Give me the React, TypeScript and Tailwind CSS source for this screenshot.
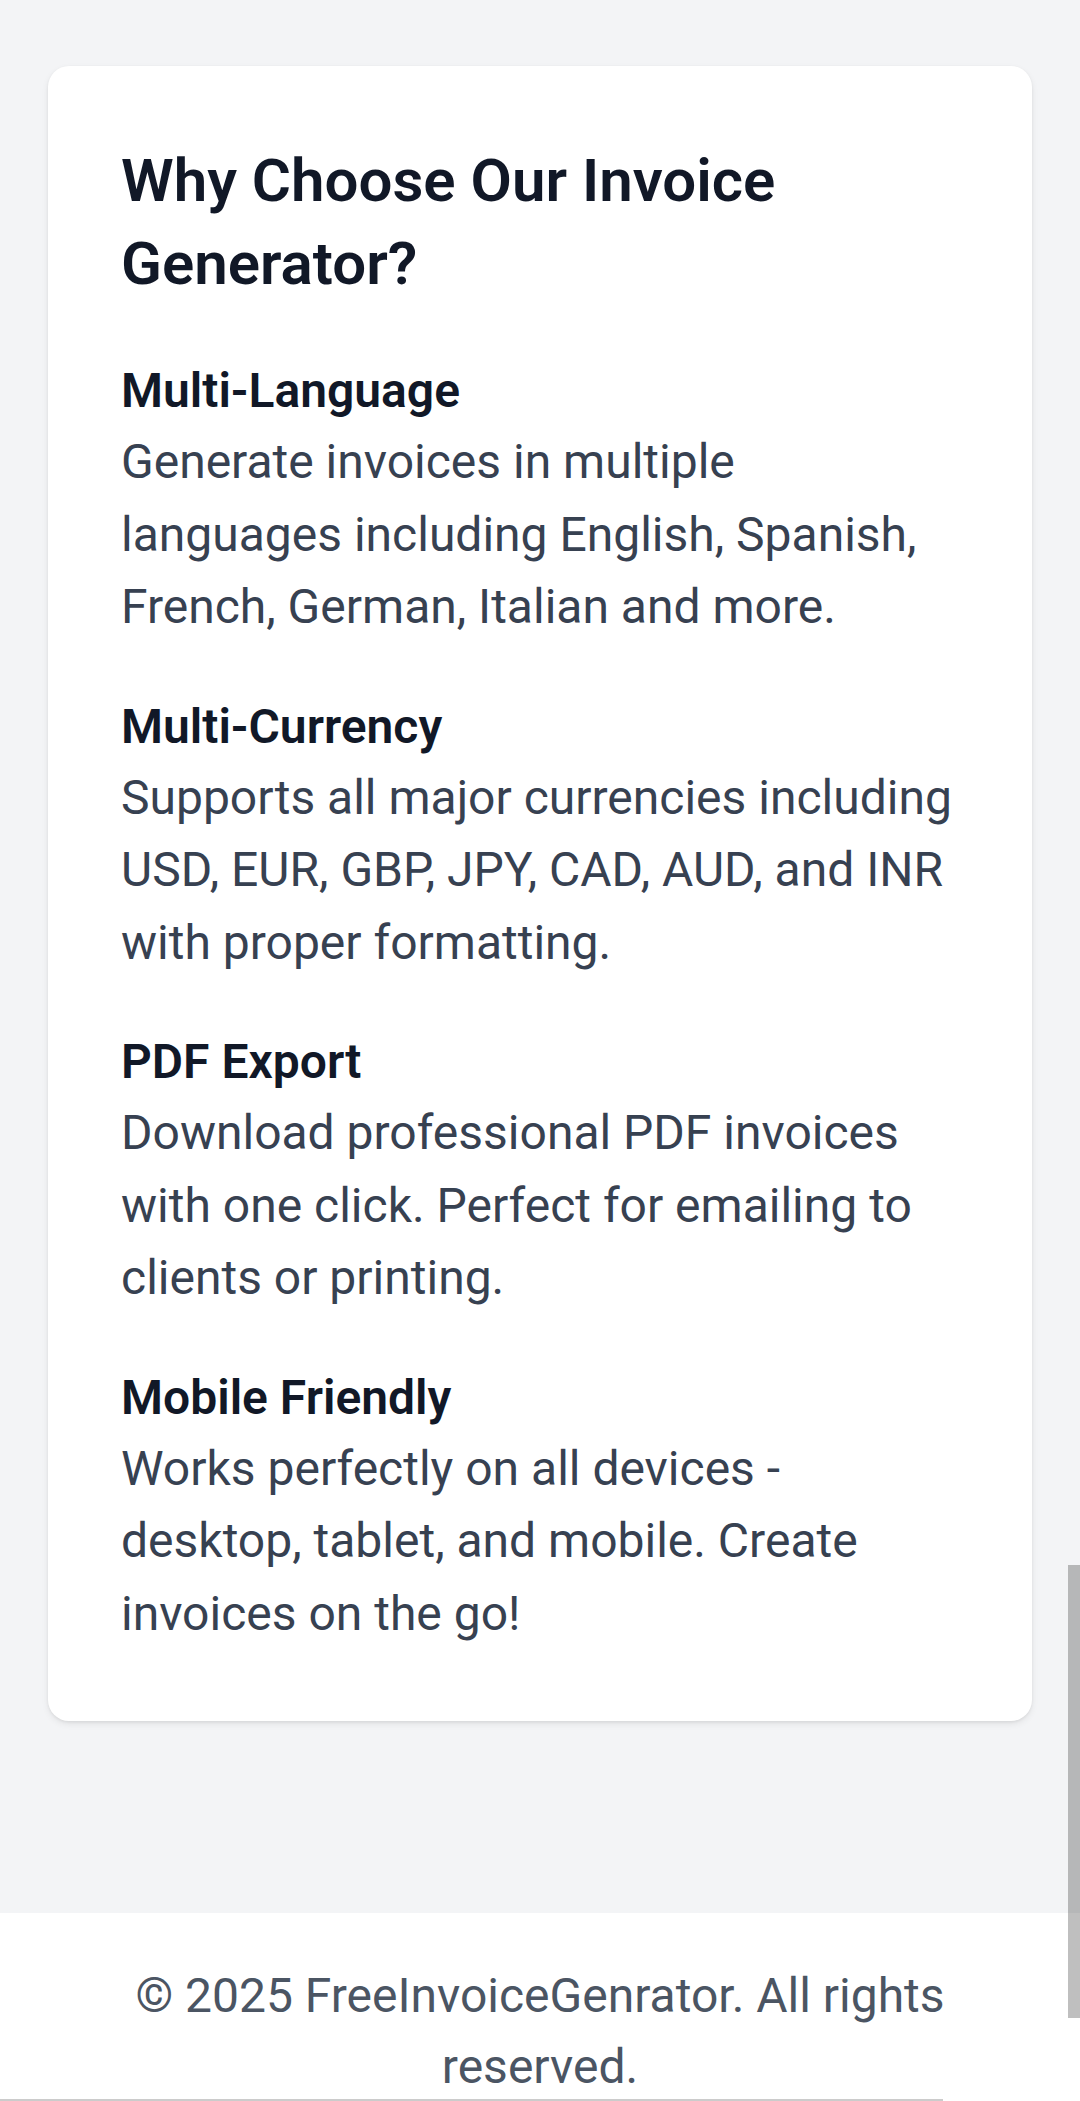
import React from 'react';

interface Feature {
  title: string;
  text: string;
}

const features: Feature[] = [
  {
    title: 'Multi-Language',
    text: 'Generate invoices in multiple languages including English, Spanish, French, German, Italian and more.',
  },
  {
    title: 'Multi-Currency',
    text: 'Supports all major currencies including USD, EUR, GBP, JPY, CAD, AUD, and INR with proper formatting.',
  },
  {
    title: 'PDF Export',
    text: 'Download professional PDF invoices with one click. Perfect for emailing to clients or printing.',
  },
  {
    title: 'Mobile Friendly',
    text: 'Works perfectly on all devices - desktop, tablet, and mobile. Create invoices on the go!',
  },
];

const App: React.FC = () => {
  return (
    <div className="relative min-h-[2101px] overflow-hidden bg-[#f3f4f6] font-['Roboto','Noto_Sans',sans-serif]">
      <main className="px-[48px] pt-[66px] pb-[192px]">
        <section className="rounded-[21px] bg-white px-[73px] pt-[73px] pb-[71px] shadow-[0_3px_8px_-2px_rgba(0,0,0,0.12),0_1px_3px_rgba(0,0,0,0.06)]">
          <h2 className="mb-[51px] text-[60px] font-semibold leading-[83px] text-[#111827]">
            Why Choose Our Invoice Generator?
          </h2>

          <div className="flex flex-col gap-[48px]">
            {features.map((f) => (
              <div key={f.title}>
                <h3 className="text-[48px] font-semibold leading-[70px] text-[#111827]">
                  {f.title}
                </h3>
                <p className="text-[48px] leading-[72.5px] text-[#374151]">{f.text}</p>
              </div>
            ))}
          </div>
        </section>
      </main>

      <footer className="bg-white px-[42px] pt-[47px] pb-[47px] text-center text-[48px] leading-[71px] text-[#4b5563]">
        © 2025 FreeInvoiceGenrator. All rights reserved.
      </footer>

      {/* overlay scroll thumbs */}
      <div className="absolute right-0 top-[1565px] h-[453px] w-[12px] bg-black/25" />
      <div className="absolute left-0 top-[2099px] h-[2px] w-[943px] bg-black/20" />
    </div>
  );
};

export default App;
